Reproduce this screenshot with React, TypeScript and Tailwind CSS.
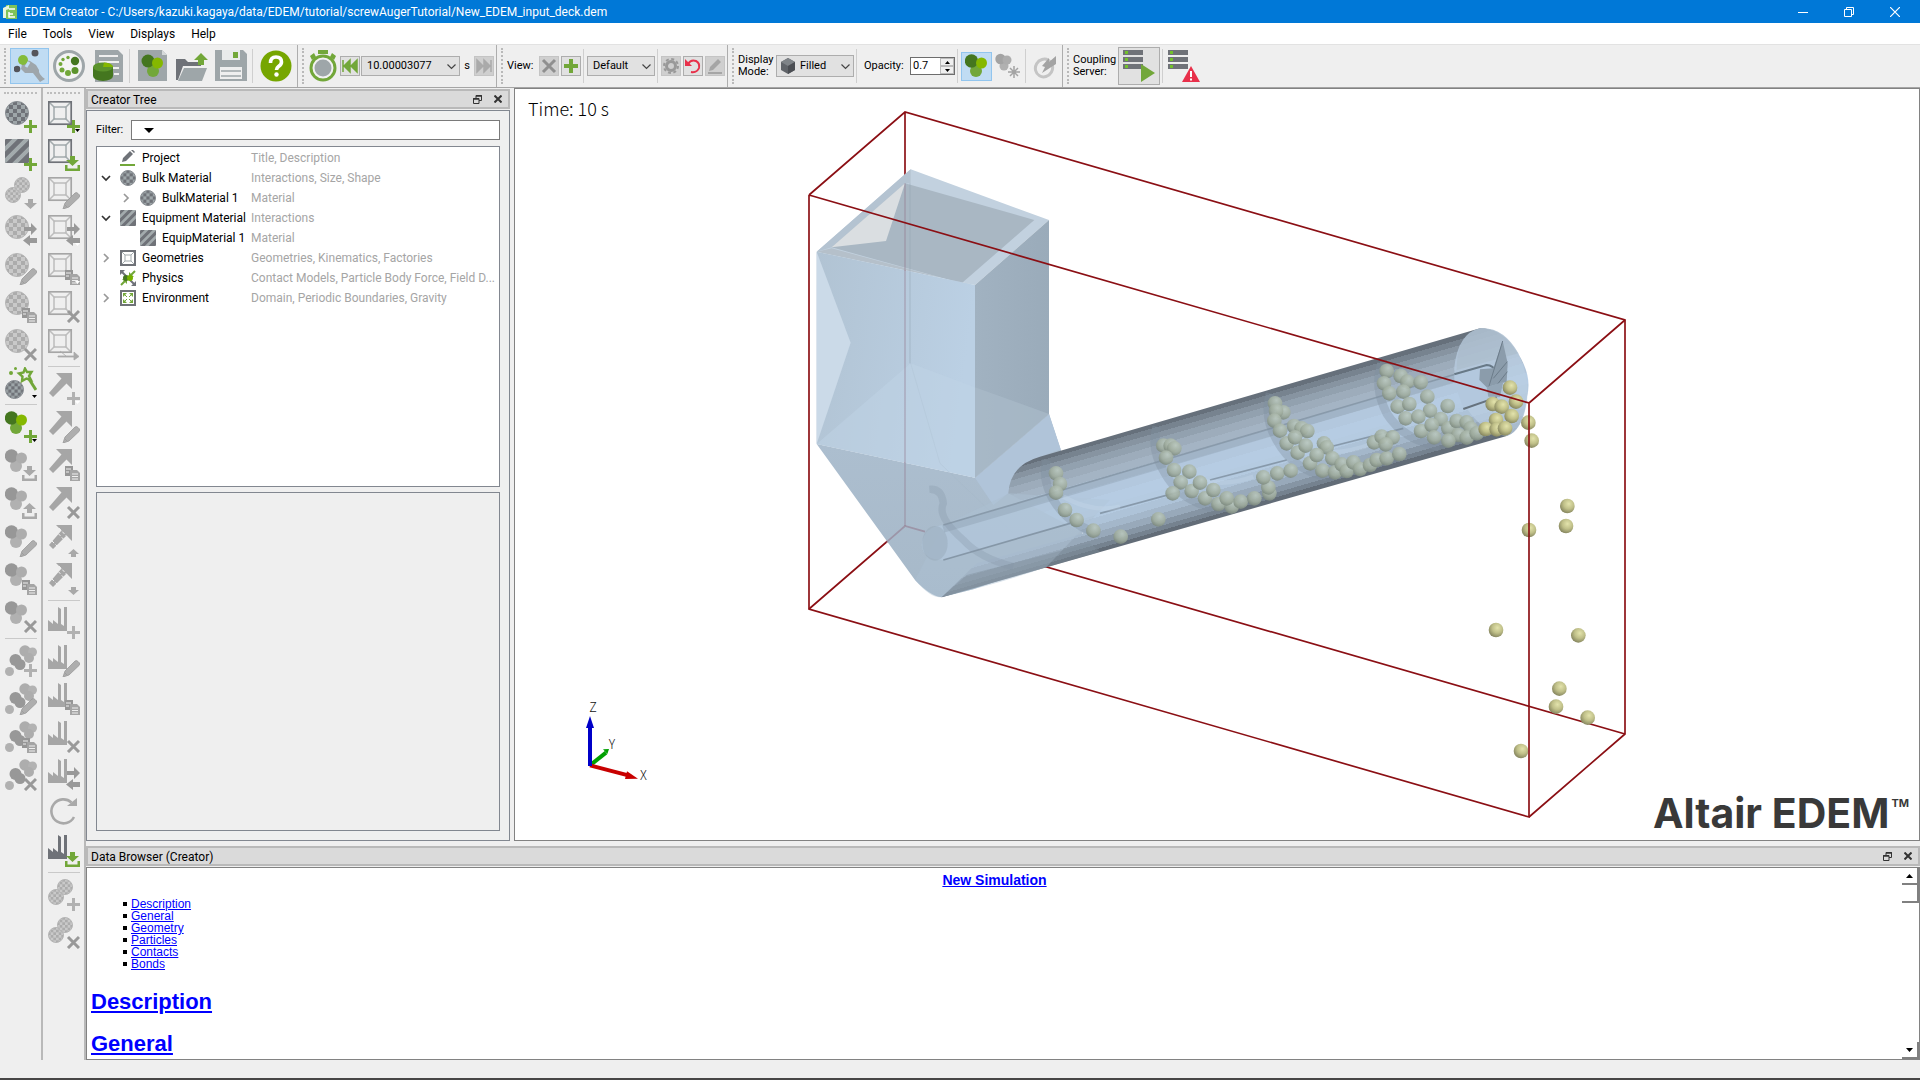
import type { ReactNode } from 'react';

const GREEN = '#72a739';
const GREY = '#a9a9a9';
const SLATE = '#6f7278';

/* ---------- shared icon parts (32 x 32 grid) ---------- */

function Checker({ cx, cy, r, on, n = 6 }: { cx: number; cy: number; r: number; on: boolean; n?: number }) {
  const id = `chk-${cx}-${cy}-${r}-${on ? 1 : 0}`;
  const cell = (r * 2) / n;
  return (
    <>
      <pattern id={id} x={cx - r} y={cy - r} width={cell * 2} height={cell * 2} patternUnits="userSpaceOnUse">
        <rect width={cell * 2} height={cell * 2} fill={on ? '#9ea6a9' : '#c9c9c9'} />
        <rect width={cell} height={cell} fill={on ? SLATE : '#acacac'} />
        <rect x={cell} y={cell} width={cell} height={cell} fill={on ? SLATE : '#acacac'} />
      </pattern>
      <circle cx={cx} cy={cy} r={r - 0.5} fill={`url(#${id})`} stroke={on ? '#868b90' : '#b5b5b5'} />
    </>
  );
}

function Stripes({ size }: { size: number }) {
  return (
    <>
      <clipPath id={`stripe-${size}`}>
        <rect width={size} height={size} rx="1" />
      </clipPath>
      <g clipPath={`url(#stripe-${size})`}>
        <rect width={size} height={size} fill={SLATE} />
        <path
          d="M-4 14L14 -4M-4 26L26 -4M2 32L32 2"
          stroke="#a3abad"
          strokeWidth="4"
          transform={`scale(${size / 24})`}
        />
      </g>
    </>
  );
}

function Particles({ on }: { on: boolean }) {
  return (
    <>
      <circle cx="11" cy="17" r="6" fill={on ? '#72a739' : '#b1b1b1'} />
      <circle cx="6.5" cy="7" r="6.7" fill={on ? '#44761f' : '#979797'} />
      <circle cx="16.5" cy="9" r="5.5" fill={on ? '#85b800' : '#adadad'} />
    </>
  );
}

function Cluster() {
  return (
    <>
      <circle cx="20" cy="6" r="5.7" fill="#adadad" />
      <circle cx="27.5" cy="7" r="4.5" fill="#b3b3b3" />
      <circle cx="24" cy="13" r="5" fill="#adadad" />
      <circle cx="10.5" cy="15" r="6" fill="#989898" />
      <circle cx="15" cy="19.5" r="5.5" fill="#989898" />
      <circle cx="4.5" cy="26.5" r="4.5" fill="#b1b1b1" />
    </>
  );
}

function Frame({ on }: { on: boolean }) {
  const outer = on ? SLATE : '#a6a6a6';
  const inner = on ? '#a3abad' : '#bdbdbd';
  return (
    <g fill="none">
      <path d="M1 1L7 7M23 1L17 7M1 23L7 17M23 23L17 17" stroke={inner} strokeWidth="1.5" />
      <rect x="6" y="6" width="12" height="12" stroke={inner} strokeWidth="1.5" />
      <rect x="0.8" y="0.8" width="22.4" height="22.4" stroke={outer} strokeWidth="1.7" />
    </g>
  );
}

function Arrow({ dashed }: { dashed?: boolean }) {
  return (
    <>
      <path d="M8 0H24V16L18.5 10.5L5 24L1 20L13.5 5.5Z" fill="#a6a6a6" />
      {dashed && <path d="M7 5l12 13M11 3l11 12M4 16l6 6" stroke="#efefef" strokeWidth="1" strokeDasharray="3 2" />}
    </>
  );
}

function Factory({ on }: { on?: boolean }) {
  return <path d="M0 24V13L5 17V13L10 17V0L13 2V17L16 19V0H19V24Z" fill={on ? SLATE : '#a6a6a6'} />;
}

const badges: Record<string, (on: boolean) => ReactNode> = {
  plus: (on) => <path d="M25.5 19V32M19 25.5H32" stroke={on ? GREEN : '#b1b1b1'} strokeWidth="3" />,
  cross: () => <path d="M20 20L31 31M31 20L20 31" stroke="#999" strokeWidth="3" />,
  drop: () => <path d="M23 22H28V26H32L25.5 32L19 26H23Z" fill={GREY} />,
  raise: () => <path d="M25.5 24L31 29H28V32H23V29H20Z" fill={GREY} />,
  lower: () => <path d="M25.5 32L31 27H28V24H23V27H20Z" fill={GREY} />,
  swap: () => <path d="M19 12H26V8L32 14L26 20V16H19ZM32 23H25V20L18 25.5L25 31V28H32Z" fill="#999" />,
  pencil: () => (
    <path
      d="M15 32L17 26L27 16Q28.5 15 30 16.5L31.5 18Q32.5 19 31 20.5L21 30ZM17 28L19 30"
      fill="#aeaeae"
      stroke="#999"
      strokeWidth="0.8"
    />
  ),
  copy: () => (
    <>
      <path d="M17 17H25V27H17Z" fill="#969696" />
      <path d="M22 21H29L32 24V32H22Z" fill="#a5a5a5" />
      <path d="M18 20H23M18 23H21M24 25H30M24 27.5H30M24 30H30" stroke="#efefef" />
    </>
  ),
  download: (on) => (
    <path
      d="M22 17H27V21H31L24.5 27L18 21H22ZM17 26H19.5V29.5H29.5V26H32V32H17Z"
      fill={on ? GREEN : GREY}
    />
  ),
  upload: () => <path d="M22 26H27V22H31L24.5 16L18 22H22ZM17 26H19.5V29.5H29.5V26H32V32H17Z" fill={GREY} />,
  shift: () => (
    <path d="M12 22L18 27M10 27H26V23L31 27.5L26 31V28H10Z" fill={GREY} stroke={GREY} strokeWidth="0.8" />
  ),
};

function base(kind: string, on: boolean): ReactNode {
  switch (kind) {
    case 'bulk':
      return <Checker cx={12} cy={12} r={12} on={on} />;
    case 'equip':
      return <Stripes size={24} />;
    case 'pair':
      return (
        <>
          <Checker cx={8} cy={18} r={8} on={false} />
          <Checker cx={17} cy={8} r={8} on={false} />
        </>
      );
    case 'wand':
      return (
        <>
          <Checker cx={9.5} cy={22.5} r={9.5} on />
          <circle cx="6" cy="6" r="2" fill={GREEN} />
          <circle cx="10.5" cy="1.5" r="1.5" fill={GREEN} />
          <path
            d="M20 1.5L22 5H26.5L24 9L26 13L21.5 11.5L17 14L17.5 9.5L14 6.5L18.5 5.5Z"
            fill="none"
            stroke={GREEN}
            strokeWidth="2.4"
          />
          <path d="M24 12L31 23" stroke={GREEN} strokeWidth="3" />
        </>
      );
    case 'particles':
      return <Particles on={on} />;
    case 'cluster':
      return <Cluster />;
    case 'frame':
      return <Frame on={on} />;
    case 'arrow':
      return <Arrow />;
    case 'darrow':
      return <Arrow dashed />;
    case 'factory':
      return <Factory on={on} />;
    default:
      return (
        <>
          <path d="M26 20A12 12 0 1 1 23.5 5.5" fill="none" stroke={GREY} strokeWidth="2.6" />
          <path d="M19 9H29V1Z" fill={GREY} />
        </>
      );
  }
}

interface Tool {
  label: string;
  kind: string;
  badge?: string;
  on?: boolean;
  menu?: 'dark' | 'light';
}

const materialTools: (Tool | null)[] = [
  { label: 'Add bulk material', kind: 'bulk', badge: 'plus', on: true },
  { label: 'Add equipment material', kind: 'equip', badge: 'plus', on: true },
  { label: 'Import material', kind: 'pair', badge: 'drop' },
  { label: 'Transfer material', kind: 'bulk', badge: 'swap' },
  { label: 'Rename material', kind: 'bulk', badge: 'pencil' },
  { label: 'Copy material', kind: 'bulk', badge: 'copy' },
  { label: 'Delete material', kind: 'bulk', badge: 'cross' },
  { label: 'Material wizard', kind: 'wand', on: true, menu: 'dark' },
  null,
  { label: 'Add particle', kind: 'particles', badge: 'plus', on: true, menu: 'dark' },
  { label: 'Import particle', kind: 'particles', badge: 'download' },
  { label: 'Export particle', kind: 'particles', badge: 'upload' },
  { label: 'Rename particle', kind: 'particles', badge: 'pencil' },
  { label: 'Copy particle', kind: 'particles', badge: 'copy' },
  { label: 'Delete particle', kind: 'particles', badge: 'cross' },
  null,
  { label: 'Add meta-particle', kind: 'cluster', badge: 'plus' },
  { label: 'Rename meta-particle', kind: 'cluster', badge: 'pencil' },
  { label: 'Copy meta-particle', kind: 'cluster', badge: 'copy' },
  { label: 'Delete meta-particle', kind: 'cluster', badge: 'cross' },
];

const geometryTools: (Tool | null)[] = [
  { label: 'Add geometry', kind: 'frame', badge: 'plus', on: true, menu: 'dark' },
  { label: 'Import geometry', kind: 'frame', badge: 'download', on: true },
  { label: 'Rename geometry', kind: 'frame', badge: 'pencil' },
  { label: 'Transform geometry', kind: 'frame', badge: 'swap', menu: 'light' },
  { label: 'Copy geometry', kind: 'frame', badge: 'copy', menu: 'light' },
  { label: 'Delete geometry', kind: 'frame', badge: 'cross' },
  { label: 'Merge geometry', kind: 'frame', badge: 'shift' },
  null,
  { label: 'Add kinematic', kind: 'arrow', badge: 'plus', menu: 'light' },
  { label: 'Rename kinematic', kind: 'arrow', badge: 'pencil' },
  { label: 'Copy kinematic', kind: 'arrow', badge: 'copy' },
  { label: 'Delete kinematic', kind: 'arrow', badge: 'cross' },
  { label: 'Move kinematic up', kind: 'darrow', badge: 'raise' },
  { label: 'Move kinematic down', kind: 'darrow', badge: 'lower' },
  null,
  { label: 'Add factory', kind: 'factory', badge: 'plus' },
  { label: 'Rename factory', kind: 'factory', badge: 'pencil' },
  { label: 'Copy factory', kind: 'factory', badge: 'copy' },
  { label: 'Delete factory', kind: 'factory', badge: 'cross' },
  { label: 'Transfer factory', kind: 'factory', badge: 'swap' },
  { label: 'Reset factory', kind: 'refresh' },
  { label: 'Import factory', kind: 'factory', badge: 'download', on: true },
  null,
  { label: 'Add material block', kind: 'pair', badge: 'plus' },
  { label: 'Delete material block', kind: 'pair', badge: 'cross' },
];

function ToolColumn({ tools }: { tools: (Tool | null)[] }) {
  return (
    <div className="flex w-[43px] shrink-0 flex-col border-r-2 border-[#b9b9b9] pt-1 pl-[2px]">
      <div className="mr-1 mb-1 ml-[2px] border-t-2 border-dotted border-[#bdbdbd]" />
      {tools.map((t, i) =>
        t ? (
          <button key={t.label} aria-label={t.label} className="h-[38px] shrink-0 pl-[3px]">
            <svg viewBox="0 0 32 32" className="h-8 w-8">
              {base(t.kind, !!t.on)}
              {t.badge && badges[t.badge](!!t.on)}
              {t.menu && <path d="M27 28H32L29.5 31Z" fill={t.menu === 'dark' ? '#000' : '#fff'} />}
            </svg>
          </button>
        ) : (
          <div key={i} className="my-[2px] mr-1 ml-[3px] h-[2px] shrink-0 border-t border-[#c9c9c9]" />
        ),
      )}
    </div>
  );
}

/* ---------- top toolbar ---------- */

function Group({ children, last }: { children: ReactNode; last?: boolean }) {
  return (
    <div className={last ? 'flex items-center' : 'flex items-center border-r border-[#adadad] pr-[2px]'}>
      <div className="mr-1 ml-1 h-9 border-l-2 border-dotted border-[#b9b9b9]" />
      {children}
    </div>
  );
}

function Sep() {
  return <div className="mr-[3px] ml-[2px] h-[34px] w-px shrink-0 bg-[#cfcfcf]" />;
}

function BigButton({ label, active, children }: { label: string; active?: boolean; children: ReactNode }) {
  return (
    <button
      aria-label={label}
      className={
        active
          ? 'flex h-9 w-[39px] items-center justify-center border border-[#92c5ee] bg-[#c0dcf3]'
          : 'flex h-9 w-[39px] items-center justify-center'
      }
    >
      <svg viewBox="0 0 32 32" className="h-8 w-8">
        {children}
      </svg>
    </button>
  );
}

function SmallButton({ label, off, children }: { label: string; off?: boolean; children: ReactNode }) {
  return (
    <button
      aria-label={label}
      className={
        off
          ? 'flex h-5 w-5 shrink-0 items-center justify-center border border-[#c4c4c4] bg-[#cfcfcf]'
          : 'flex h-5 w-5 shrink-0 items-center justify-center border border-[#adadad] bg-[#e1e1e1]'
      }
    >
      <svg viewBox="0 0 18 18" className="h-[18px] w-[18px]">
        {children}
      </svg>
    </button>
  );
}

function Dropdown({ label, value, className }: { label: string; value: string; className: string }) {
  return (
    <span className={`relative shrink-0 ${className}`}>
      <select
        aria-label={label}
        className={
          value === 'Filled'
            ? 'h-full w-full appearance-none border border-[#adadad] bg-[#e1e1e1] pl-[23px]'
            : 'h-full w-full appearance-none border border-[#adadad] bg-[#e1e1e1] pl-[5px]'
        }
      >
        <option>{value}</option>
      </select>
      <svg viewBox="0 0 9 6" className="absolute top-1/2 right-1 -mt-[2px] h-[6px] w-[9px]">
        <path d="M0.5 0.5L4.5 4.5L8.5 0.5" fill="none" stroke="#444" strokeWidth="1.2" />
      </svg>
    </span>
  );
}

function ServerStack() {
  return (
    <>
      {[0, 7, 14].map((y) => (
        <g key={y}>
          <rect x="0" y={y} width="20" height="5" fill={SLATE} />
          <rect x="2" y={y + 1} width="3" height="3" fill="#72c02c" />
        </g>
      ))}
    </>
  );
}

function Toolbar() {
  return (
    <div className="flex h-[44px] shrink-0 border-t border-b border-[#e2e2e2] border-b-[#a5a5a5] bg-[#efefef] text-[11px] leading-3">
      <Group>
        <BigButton label="Creator" active>
          <path d="M7 6L12 10L16 11L22 15L25 20Q24 24 31 29L26 32L19 23L11 23L7 19L8 14Z" fill="#9ea6ab" />
          <circle cx="9" cy="10" r="5" fill="#83bb3b" />
          <circle cx="21" cy="3" r="3.5" fill="#55555b" />
          <circle cx="3" cy="19" r="3.3" fill="#55555b" />
          <path d="M12 17L15 12" stroke="#c0dcf3" strokeWidth="3" />
        </BigButton>
        <BigButton label="Simulator">
          <circle cx="16" cy="16" r="14.5" fill="#f4f4f4" stroke="#9ea6a9" strokeWidth="3" />
          <g fill="#44761f">
            <circle cx="22" cy="11" r="4.2" />
            <circle cx="22" cy="20.5" r="3.5" fill="#5b932c" />
            <circle cx="15" cy="23" r="3" fill={GREEN} />
            <circle cx="9" cy="20" r="2.5" fill={GREEN} />
            <circle cx="7.5" cy="14" r="2" fill={GREEN} />
            <circle cx="10" cy="9.5" r="1.7" fill={GREEN} />
            <circle cx="15" cy="7.5" r="1.7" fill={GREEN} />
          </g>
        </BigButton>
        <BigButton label="Analyst">
          <path d="M3 0H26L31 5V32H3Z" fill="#9ea6a9" />
          <path d="M7 6H26M7 12H27M20 18H27M22 24H27" stroke="#efefef" strokeWidth="2" />
          <path d="M1 17V26A10 5 0 0 0 21 26V17Z" fill="#44761f" />
          <ellipse cx="11" cy="17" rx="10" ry="4.5" fill="#5b932c" />
          <path d="M11 17L12 12.5A10 4.5 0 0 1 21 17Z" fill="#85b800" />
        </BigButton>
        <Sep />
        <BigButton label="New">
          <path d="M1 0H25L30 5V31H1Z" fill="#9ea6a9" />
          <path d="M25 0V5H30Z" fill="#d5d9da" />
          <circle cx="16" cy="21" r="6" fill={GREEN} />
          <circle cx="11" cy="11" r="6.5" fill="#44761f" />
          <circle cx="20.5" cy="13" r="5.5" fill="#85b800" />
        </BigButton>
        <BigButton label="Open">
          <path d="M0 9H9L12 12H25V16H7L2 30H0Z" fill="#6f7278" />
          <path d="M8 18H31L26 31H2Z" fill="#9ea6a9" />
          <path d="M25 3L32 10H28V15H22V10H18Z" fill={GREEN} />
        </BigButton>
        <BigButton label="Save">
          <path d="M0 0H28L32 4V31H0Z" fill="#9ea6a9" />
          <path d="M7 0H25V10H7Z" fill="#e9ebeb" />
          <path d="M18 2H23V8H18Z" fill={GREEN} />
          <path d="M5 17H27V29H5Z" fill="#efefef" />
          <path d="M6 21H26M6 26H26" stroke="#9ea6a9" strokeWidth="1.5" />
        </BigButton>
        <Sep />
        <BigButton label="Help">
          <circle cx="16" cy="16" r="15.5" fill="#76a600" />
          <path
            d="M10.5 13Q10.5 7 16 7Q21.5 7 21.5 12Q21.5 14.5 18.5 16.5Q16.5 18 16.5 20"
            fill="none"
            stroke="#fff"
            strokeWidth="3.6"
          />
          <circle cx="16.5" cy="24.5" r="2.2" fill="#fff" />
        </BigButton>
      </Group>

      <Group>
        <svg viewBox="0 0 30 32" className="mr-[2px] h-8 w-[30px]">
          <path d="M10 0H20V4H10ZM2 6L6 3L8 7L4 10ZM28 6L24 3L22 7L26 10Z" fill={GREEN} />
          <circle cx="15" cy="18" r="12" fill="#f2f2f2" stroke={GREEN} strokeWidth="3" />
          <circle cx="15" cy="18" r="8.5" fill="#9ea6a9" />
        </svg>
        <SmallButton label="First step">
          <path d="M2 3V15M9 3L3 9L9 15ZM16 3L10 9L16 15Z" fill={GREEN} stroke={GREEN} strokeWidth="1.5" />
        </SmallButton>
        <Dropdown label="Time step" value="10.00003077" className="ml-px h-5 w-[99px]" />
        <span className="w-[14px] text-center">s</span>
        <SmallButton label="Last step" off>
          <path d="M16 3V15M9 3L15 9L9 15ZM2 3L8 9L2 15Z" fill="#aaa" stroke="#aaa" strokeWidth="1.5" />
        </SmallButton>
      </Group>

      <Group>
        <span className="w-8">View:</span>
        <SmallButton label="Delete view" off>
          <path d="M3 3L15 15M15 3L3 15" stroke="#8f8f8f" strokeWidth="3" />
        </SmallButton>
        <span className="w-[2px]" />
        <SmallButton label="Add view">
          <path d="M9 2V16M2 9H16" stroke={GREEN} strokeWidth="4" />
        </SmallButton>
        <Sep />
        <Dropdown label="Saved view" value="Default" className="h-5 w-[68px]" />
        <Sep />
        <div className="flex gap-[2px]">
          <SmallButton label="View settings" off>
            <circle cx="9" cy="9" r="4.5" fill="none" stroke="#999" strokeWidth="3" />
            <circle cx="9" cy="9" r="7" fill="none" stroke="#999" strokeWidth="2" strokeDasharray="3 2.5" />
          </SmallButton>
          <SmallButton label="Reset view">
            <path d="M4 7Q7 2 12 4Q16 6 15 11Q13 16 7 15" fill="none" stroke="#e8304a" strokeWidth="2" />
            <path d="M1 2V9H8Z" fill="#e8304a" />
          </SmallButton>
          <SmallButton label="Edit view" off>
            <path d="M3 14L4 10L12 2L15 5L7 13ZM2 15H16V17H2Z" fill="#a5a5a5" />
          </SmallButton>
        </div>
      </Group>

      <Group>
        <span className="w-[38px]">
          Display
          <br />
          Mode:
        </span>
        <span className="relative">
          <Dropdown label="Display mode" value="Filled" className="block h-[22px] w-[78px]" />
          <svg viewBox="0 0 16 16" className="pointer-events-none absolute top-[3px] left-1 h-4 w-4">
            <path d="M8 0L15 4V12L8 16L1 12V4Z" fill="#606469" />
            <path d="M8 0L15 4L8 8L1 4Z" fill="#7f8488" />
            <path d="M8 8L15 4V12L8 16Z" fill="#4b4e53" />
          </svg>
        </span>
        <Sep />
        <label htmlFor="opacity" className="mr-1 ml-1 w-[42px]">
          Opacity:
        </label>
        <div className="flex h-[18px] w-[45px] border border-[#6d6d6d] bg-white">
          <input id="opacity" defaultValue="0.7" className="w-[29px] pl-[2px]" />
          <div className="flex w-[14px] flex-col">
            <button aria-label="Increase" className="flex h-2 items-center justify-center border border-[#bbb] bg-[#efefef]">
              <svg viewBox="0 0 5 3" className="h-[3px] w-[5px]">
                <path d="M0 3L2.5 0L5 3Z" />
              </svg>
            </button>
            <button aria-label="Decrease" className="flex h-2 items-center justify-center border border-[#bbb] bg-[#efefef]">
              <svg viewBox="0 0 5 3" className="h-[3px] w-[5px]">
                <path d="M0 0L2.5 3L5 0Z" />
              </svg>
            </button>
          </div>
        </div>
        <Sep />
        <button aria-label="Show particles" className="flex h-[29px] w-[31px] items-center justify-center border border-[#92c5ee] bg-[#c0dcf3]">
          <svg viewBox="0 0 24 24" className="h-6 w-6">
            <Particles on />
          </svg>
        </button>
        <button aria-label="Freeze particles" className="flex h-[29px] w-[31px] items-center justify-center">
          <svg viewBox="0 0 26 26" className="h-[26px] w-[26px]">
            <circle cx="9" cy="13" r="4.5" fill="#b1b1b1" />
            <circle cx="5.5" cy="6" r="5.2" fill="#a3a3a3" />
            <circle cx="12" cy="7" r="4.5" fill="#adadad" />
            <path d="M19 13V25M13 19H25M15 15L23 23M23 15L15 23" stroke="#a3a3a3" strokeWidth="1.5" />
          </svg>
        </button>
        <Sep />
        <button aria-label="Clip plane" className="flex h-[29px] w-[31px] items-center justify-center">
          <svg viewBox="0 0 24 26" className="h-[26px] w-6">
            <ellipse cx="11" cy="15" rx="8.5" ry="9" fill="none" stroke="#c4c4c4" strokeWidth="3" transform="rotate(30 11 15)" />
            <path d="M9 13L16 5V9L23 3V11L9 20L12 14Z" fill="#a3a3a3" />
          </svg>
        </button>
      </Group>

      <Group last>
        <span className="w-[45px]">
          Coupling
          <br />
          Server:
        </span>
        <button aria-label="Start coupling server" className="flex h-[38px] w-[42px] items-center justify-center border border-[#adadad] bg-[#e1e1e1]">
          <svg viewBox="0 0 32 32" className="h-8 w-8">
            <ServerStack />
            <path d="M18 14L32 23L18 32Z" fill={GREEN} />
          </svg>
        </button>
        <Sep />
        <button aria-label="Coupling server errors" className="flex h-[38px] w-9 items-center justify-center">
          <svg viewBox="0 0 32 32" className="h-8 w-8">
            <ServerStack />
            <path d="M23 16L32 32H14Z" fill="#e8304a" />
            <path d="M23 21V27M23 28.5V30.5" stroke="#fff" strokeWidth="2" />
          </svg>
        </button>
      </Group>
    </div>
  );
}

/* ---------- dock panels ---------- */

function DockTitle({ children }: { children: ReactNode }) {
  return (
    <div className="flex h-5 shrink-0 items-center border-2 border-[#b9b9b9] bg-[#dadada] pr-[6px] pl-[3px] text-[12px]">
      <span className="flex-1 pt-px">{children}</span>
      <button aria-label="Float panel" className="mr-3">
        <svg viewBox="0 0 9 9" className="h-[9px] w-[9px]">
          <path d="M3 3V0.5H8.5V5.5H6M0.5 3.5H6V8.5H0.5Z" fill="none" stroke="#333" />
          <path d="M0 4H6M3 1H9" stroke="#333" strokeWidth="1.5" />
        </svg>
      </button>
      <button aria-label="Close panel">
        <svg viewBox="0 0 8 8" className="h-2 w-2">
          <path d="M0.5 0.5L7.5 7.5M7.5 0.5L0.5 7.5" stroke="#333" strokeWidth="2" />
        </svg>
      </button>
    </div>
  );
}

const treeIcons: Record<string, ReactNode> = {
  project: (
    <>
      <path d="M2 12L3 8L10 1L13 4L6 11ZM11 0L12 -1L15 2L14 3Z" fill={SLATE} />
      <path d="M0 15H15" stroke={GREEN} strokeWidth="2" />
    </>
  ),
  bulk: <Checker cx={8} cy={8} r={8} on n={5} />,
  equip: <Stripes size={16} />,
  geometry: (
    <g fill="none">
      <rect x="1" y="1" width="14" height="14" stroke={SLATE} strokeWidth="2" />
      <rect x="5" y="5" width="6" height="6" stroke="#a3abad" />
      <path d="M2 2L5 5M14 2L11 5M2 14L5 11M14 14L11 11" stroke="#a3abad" />
    </g>
  ),
  physics: (
    <>
      <path d="M0 0H5L0 5ZM16 16H11L16 11Z" fill={SLATE} />
      <path d="M1 1L6 6M15 15L10 10" stroke={SLATE} strokeWidth="2" />
      <path d="M15 1L10 6M1 15L6 10" stroke={GREEN} strokeWidth="2" />
      <path d="M9 2V7H14ZM2 9H7V14Z" fill={GREEN} />
      <circle cx="6" cy="8" r="3" fill="#44761f" />
      <circle cx="10" cy="8" r="3" fill="#76b000" />
    </>
  ),
  environment: (
    <>
      <rect x="1" y="1" width="14" height="14" fill="#fff" stroke={SLATE} strokeWidth="2" />
      <path d="M3 3H7L3 7ZM13 3H9L13 7ZM3 13H7L3 9ZM13 13H9L13 9Z" fill={GREEN} />
      <path d="M4 4L7 7M12 4L9 7M4 12L7 9M12 12L9 9" stroke={GREEN} />
    </>
  ),
};

const tree = [
  { name: 'Project', info: 'Title, Description', icon: 'project' },
  { name: 'Bulk Material', info: 'Interactions, Size, Shape', icon: 'bulk', open: true },
  { name: 'BulkMaterial 1', info: 'Material', icon: 'bulk', child: true, open: false },
  { name: 'Equipment Material', info: 'Interactions', icon: 'equip', open: true },
  { name: 'EquipMaterial 1', info: 'Material', icon: 'equip', child: true },
  { name: 'Geometries', info: 'Geometries, Kinematics, Factories', icon: 'geometry', open: false },
  { name: 'Physics', info: 'Contact Models, Particle Body Force, Field D...', icon: 'physics' },
  { name: 'Environment', info: 'Domain, Periodic Boundaries, Gravity', icon: 'environment', open: false },
];

function CreatorTree() {
  return (
    <aside className="flex w-[424px] shrink-0 flex-col pt-px">
      <DockTitle>Creator Tree</DockTitle>
      <div className="mt-px flex flex-1 flex-col border border-[#828790] p-[9px]">
        <div className="flex h-5 items-center">
          <label htmlFor="filter" className="w-[35px] text-[11px]">
            Filter:
          </label>
          <span className="relative h-5 flex-1">
            <input id="filter" className="h-full w-full border border-[#7a7a7a] bg-white pl-8" />
            <svg viewBox="0 0 10 5" className="absolute top-2 left-[13px] h-[5px] w-[10px]">
              <path d="M0 0H10L5 5Z" />
            </svg>
          </span>
        </div>
        <div className="mt-[6px] flex-1 overflow-hidden border border-[#828790] bg-white pt-px">
          {tree.map((row) => (
            <div key={row.name} className="flex h-5 items-center text-[12px] whitespace-nowrap">
              <div className={row.child ? 'flex w-[154px] shrink-0 items-center pl-5' : 'flex w-[154px] shrink-0 items-center'}>
                <span className="flex w-[23px] shrink-0 items-center pl-1">
                  {row.open !== undefined && (
                    <svg viewBox="0 0 10 10" className="h-[10px] w-[10px]">
                      {row.open ? (
                        <path d="M1 3L5 7L9 3" fill="none" stroke="#333" strokeWidth="1.7" />
                      ) : (
                        <path d="M3 1L7 5L3 9" fill="none" stroke="#999" strokeWidth="1.7" />
                      )}
                    </svg>
                  )}
                </span>
                <svg viewBox="0 0 16 16" className="mr-[6px] h-4 w-4 shrink-0">
                  {treeIcons[row.icon]}
                </svg>
                {row.name}
              </div>
              <span className="text-[#a5a5a5]">{row.info}</span>
            </div>
          ))}
        </div>
        <div className="mt-[5px] flex-1 border border-[#828790]" />
      </div>
    </aside>
  );
}

/* ---------- 3D view ---------- */

// Centres of the particles still inside the tube.
const inside: [number, number][] = [
  [-192, 520], [-180, 552], [-192, 578], [-165, 630], [-130, 660], [-80, 692], [2, 710],
  [130, 437], [152, 437], [163, 445], [138, 473], [162, 510], [208, 515], [182, 547], [215, 573],
  [240, 548], [158, 580], [255, 595], [280, 570], [295, 612], [335, 620], [320, 595], [362, 605],
  [403, 595], [448, 580], [445, 562], [430, 532], [472, 520], [512, 512], [115, 658],
  [465, 310], [490, 337], [468, 333], [463, 362], [480, 392], [522, 378], [545, 385], [562, 393],
  [500, 430], [525, 412], [533, 458], [557, 437], [612, 430], [620, 442], [570, 490], [590, 465],
  [637, 475], [607, 512], [645, 517], [665, 493], [680, 513], [700, 487], [720, 507], [750, 495],
  [770, 480], [800, 475], [838, 462], [762, 427], [785, 410], [818, 412], [797, 433],
  [800, 213], [842, 228], [792, 250], [862, 245], [902, 247], [808, 280], [850, 275], [922, 290],
  [833, 320], [868, 312], [930, 332], [857, 355], [895, 350], [983, 318], [962, 357], [903, 393],
  [935, 375], [942, 412], [985, 385], [1010, 363], [1040, 367], [1052, 385], [1015, 405], [985, 422],
  [1040, 413], [1070, 400],
];

const outside: [number, number][] = [
  [1118, 312], [1145, 320], [1188, 305], [1170, 263], [1128, 360], [1175, 348], [1097, 387],
  [1130, 388], [1155, 385], [1225, 368], [1235, 422], [1227, 690], [1342, 618], [1338, 678],
  [1128, 990], [1375, 1006], [1318, 1166], [1308, 1220], [1403, 1253], [1203, 1353],
];

// Shading bands over the tube's width, from its upper to its lower edge.
const bands: [number, string][] = [
  [0, '#66707b'], [4, '#77838f'], [9, '#8794a1'], [14, '#92a1af'], [20, '#9dacbb'], [27, '#a4b4c4'],
  [34, '#abbdcf'], [41, '#b1c5da'], [50, '#b6cde5'], [60, '#b4cae0'], [68, '#aec3d8'], [75, '#a4b7ca'],
  [81, '#98a9ba'], [87, '#8695a4'], [92, '#75828f'], [96, '#626c77'],
];

function Scene() {
  return (
    <svg viewBox="1545 267 4212 2253" className="block h-full w-full">
      <defs>
        <linearGradient id="tube" gradientUnits="userSpaceOnUse" x1="3600" y1="1230" x2="3691" y2="1545">
          {bands.map(([at, color], i) => [
            <stop key={`${at}a`} offset={`${at}%`} stopColor={color} />,
            <stop key={`${at}b`} offset={`${i + 1 < bands.length ? bands[i + 1][0] : 100}%`} stopColor={color} />,
          ])}
        </linearGradient>
        <linearGradient id="front" x1="0" y1="0" x2="1" y2="0.2">
          <stop offset="0" stopColor="#b1c3d3" />
          <stop offset="1" stopColor="#bbd0e4" />
        </linearGradient>
        <linearGradient id="side" x1="0" y1="0" x2="1" y2="0">
          <stop offset="0" stopColor="#a1b2c1" />
          <stop offset="1" stopColor="#9aabba" />
        </linearGradient>
        <linearGradient id="cone" x1="0" y1="0" x2="0" y2="1">
          <stop offset="0" stopColor="#adbfd0" />
          <stop offset="1" stopColor="#a7b9c9" />
        </linearGradient>
        <radialGradient id="ball" cx="0.6" cy="0.35" r="0.7">
          <stop offset="0" stopColor="#e3e3ac" />
          <stop offset="0.5" stopColor="#c0c089" />
          <stop offset="1" stopColor="#7f7f5a" />
        </radialGradient>
        <radialGradient id="dimBall" cx="0.6" cy="0.3" r="0.75">
          <stop offset="0" stopColor="#bbc9c0" />
          <stop offset="0.6" stopColor="#9fac9e" />
          <stop offset="1" stopColor="#77847a" />
        </radialGradient>
      </defs>

      {/* rear edges of the domain */}
      <path
        d="M2715 336V1578M2427 1827L2715 1578L4875 2202M2427 585L2715 336L4875 960V2202L4587 2451"
        fill="none"
        stroke="#8b0f14"
        strokeWidth="5"
      />

      {/* hopper */}
      <g transform="translate(2400 300)">
        <path d="M50 1032L345 1440Q390 1488 425 1492L520 1468L860 1350L782 1048L747 942L525 1133Z" fill="url(#cone)" />
        <path d="M525 1133L747 942L782 1048L720 1070Q630 1110 625 1180L580 1215Z" fill="#b0c4d9" />
        <path d="M50 455L332 208L747 360L525 555Z" fill="#c2d1df" />
        <path d="M50 455L332 208V250H315L95 442Z" fill="#b4c3d1" />
        <path d="M95 442L315 250L703 360L485 550Z" fill="#a9b7c3" />
        <path d="M95 442L315 250L258 423Z" fill="#dadee1" />
        <path d="M50 455L95 445L485 550L525 555Z" fill="#b5c0ca" />
        <path d="M50 455L525 555V1133L50 1032Z" fill="url(#front)" />
        <path d="M50 455L152 728L50 1032Z" fill="#cbdae8" />
        <path d="M525 555L747 360V942L525 1133Z" fill="url(#side)" />
        <path d="M50 1032L332 790L525 862V1133Z" fill="#bfd3e6" opacity="0.5" />
        <path d="M525 862L747 942L525 1133Z" fill="#a9bac9" opacity="0.7" />
        <path d="M332 790L420 1090L640 1300" fill="none" stroke="#9fb2c4" strokeWidth="2" opacity="0.3" />
        <path d="M315 250V1278" stroke="#8f6f84" strokeWidth="5" opacity="0.35" />
        <path d="M330 250V790" stroke="#93a5b4" strokeWidth="3" opacity="0.5" />
        <path d="M258 1328L315 1278L375 1295" fill="none" stroke="#8f6f84" strokeWidth="5" opacity="0.5" />
      </g>

      {/* auger tube */}
      <path
        d="M3120 1370L4440 985Q4500 985 4540 1040Q4600 1120 4581 1190Q4570 1290 4520 1308L2825 1792L2930 1690L3250 1600L3025 1480Q3030 1395 3120 1370Z"
        fill="url(#tube)"
      />
      <path d="M2820 1792Q2790 1792 2745 1740L2830 1575L3030 1480L3330 1500L3140 1700Q3020 1745 2820 1792Z" fill="#abbfd2" opacity="0.5" />
      <path d="M2825 1792L3300 1655L3270 1630L2900 1725Z" fill="#7f8e9c" opacity="0.45" />

      <g transform="translate(3360 900)">
        {/* shaft */}
        <path d="M-530 675L1100 195Q1140 200 1150 235L1130 292L-530 780Q-590 780 -595 735Q-590 680 -530 675Z" fill="#b5cbe1" opacity="0.5" />
        <path d="M-530 675L1100 195" stroke="#8293a3" strokeWidth="5" opacity="0.8" />
        <path d="M-530 687L1100 208" stroke="#8798a8" strokeWidth="22" opacity="0.35" />
        <path d="M-530 780L-150 670M-60 640L180 575M270 540L500 480M640 438L850 385M1030 325L1130 292" stroke="#7d8e9e" strokeWidth="5" opacity="0.8" />
        <ellipse cx="-555" cy="730" rx="38" ry="52" fill="#93a5b5" opacity="0.4" />
        <path d="M-572 568Q-535 565 -530 610Q-550 650 -470 720Q-420 775 -320 800" fill="none" stroke="#8495a5" strokeWidth="22" opacity="0.3" />

        {/* screw flights */}
        <g fill="none" stroke="#7e8f9f" strokeWidth="26" opacity="0.35">
          <path d="M-220 480Q-235 540 -200 600Q-150 680 -60 700" />
          <path d="M110 380Q90 450 135 520Q180 600 280 625" />
          <path d="M450 280Q430 350 470 420Q520 510 620 530" />
          <path d="M785 190Q760 260 800 340Q850 420 960 440" />
        </g>
        <g fill="none" stroke="#cfe0ef" strokeWidth="14" opacity="0.25">
          <path d="M-170 590Q-80 640 0 620M240 540Q320 560 400 530M560 450Q660 470 760 430" />
        </g>

        {inside.map(([x, y], i) => (
          <circle key={i} cx={x} cy={y} r="22" fill="url(#dimBall)" opacity="0.9" />
        ))}

        {/* open end */}
        <path d="M1080 85Q1150 80 1195 160Q1230 230 1220 310Q1205 395 1160 408Q1090 400 1040 325Q1000 260 1003 200Q1015 100 1080 85Z" fill="#b9cde2" opacity="0.75" />
        <path d="M1080 85Q1150 80 1195 160L1010 210Q1010 100 1080 85Z" fill="#a9bac9" opacity="0.55" />
        <path d="M1003 223L1100 195Q1130 200 1145 220L1150 290L1030 325L1003 250Z" fill="#b3c8de" />
        <path d="M1003 223L1100 195Q1120 196 1128 215" fill="none" stroke="#687987" strokeWidth="6" />
        <path d="M1148 123L1163 190L1160 245L1100 262L1078 240L1080 208L1120 205Z" fill="#8b9cab" />
        <path d="M1148 123L1105 265M1162 185L1120 235M1162 215L1125 262" stroke="#6c7c8a" strokeWidth="3" />
        <path d="M1100 262L1150 245L1140 290L1105 290Z" fill="#94a6b6" />
        <path d="M1030 327L1130 292" stroke="#66727d" strokeWidth="6" />

        {outside.map(([x, y], i) => (
          <circle key={i} cx={x} cy={y} r="22" fill="url(#ball)" />
        ))}
      </g>

      {/* front edges of the domain */}
      <path d="M2427 585V1827L4587 2451V1209L2427 585M4587 1209L4875 960" fill="none" stroke="#8b0f14" strokeWidth="5" />

      {/* axis triad */}
      <g transform="translate(1500 2070)">
        <path d="M270 226L318 188" stroke="#00a000" strokeWidth="12" />
        <path d="M309 178L327 177L322 192Z" fill="#00a000" />
        <path d="M270 226L385 256" stroke="#c80000" strokeWidth="12" />
        <path d="M381 244L414 266L375 267Z" fill="#c80000" />
        <path d="M270 228V112" stroke="#0000c8" strokeWidth="12" />
        <path d="M270 78L282 114H258Z" fill="#0000c8" />
        <g fontFamily="Noto Sans CJK JP, sans-serif" fontWeight="300" fontSize="38" fill="#111">
          <text x="268" y="66">Z</text>
          <text x="326" y="177">Y</text>
          <text x="420" y="270">X</text>
        </g>
      </g>
    </svg>
  );
}

function Viewer() {
  return (
    <main className="relative ml-1 min-w-0 flex-1 overflow-hidden border border-[#828282] bg-white">
      <Scene />
      <p className="absolute top-[7px] left-[13px] text-[18px] leading-6 font-[Noto_Sans_CJK_JP,sans-serif] font-light">Time: 10 s</p>
      <p className="absolute right-[10px] bottom-[5px] flex items-start leading-[44px] font-bold text-[#393939] font-[Inter,sans-serif]">
        <span className="text-[41px]">Altair EDEM</span>
        <span className="pl-[2px] text-[11px] leading-6">TM</span>
      </p>
    </main>
  );
}

/* ---------- data browser ---------- */

const sections = ['Description', 'General', 'Geometry', 'Particles', 'Contacts', 'Bonds'];

function DataBrowser() {
  return (
    <section className="mt-[5px] flex h-[214px] shrink-0 flex-col">
      <DockTitle>Data Browser (Creator)</DockTitle>
      <div className="mt-px flex min-h-0 flex-1 border border-[#828282] bg-white text-[#0000ff] font-[Liberation_Sans,sans-serif]">
        <div className="min-w-0 flex-1 overflow-hidden px-1">
          <p className="pt-1 text-center text-[14px] leading-4 font-bold">
            <a href="#simulation" className="underline">
              New Simulation
            </a>
          </p>
          <ul className="mt-[10px] text-[12px] leading-3">
            {sections.map((s) => (
              <li key={s} className="flex items-center pl-8">
                <span className="mr-1 h-1 w-1 bg-black" />
                <a href={`#${s}`} className="underline">
                  {s}
                </a>
              </li>
            ))}
          </ul>
          <div className="mt-[19px] flex flex-col gap-4 text-[22px] leading-[26px] font-bold">
            <h2>
              <a href="#Description" className="underline">
                Description
              </a>
            </h2>
            <h2>
              <a href="#General" className="underline">
                General
              </a>
            </h2>
          </div>
        </div>
        <div className="flex w-[17px] flex-col">
          <button aria-label="Scroll up" className="flex h-[17px] items-center justify-center border-r-2 border-b-2 border-[#808080]">
            <svg viewBox="0 0 7 4" className="h-1 w-[7px]">
              <path d="M0 4L3.5 0L7 4Z" fill="#000" />
            </svg>
          </button>
          <div className="h-[18px] border-r-2 border-b-2 border-[#808080]" />
          <div className="flex-1" />
          <button aria-label="Scroll down" className="flex h-[17px] items-center justify-center border-r-2 border-b-2 border-[#808080]">
            <svg viewBox="0 0 7 4" className="h-1 w-[7px]">
              <path d="M0 0L3.5 4L7 0Z" fill="#000" />
            </svg>
          </button>
        </div>
      </div>
    </section>
  );
}

export default function App() {
  return (
    <div className="flex h-screen flex-col overflow-hidden bg-[#efefef] text-[12px] text-black font-[Roboto,sans-serif]">
      {/* title bar */}
      <header className="flex h-[23px] shrink-0 items-center bg-[#0078d7] pl-[3px] text-white">
        <svg viewBox="0 0 14 14" className="mr-[7px] h-[14px] w-[14px]">
          <path d="M3 0H14V14H3Z" fill="#7fc35a" />
          <path d="M0 3L6 0V4L3 5V13H0Z" fill="#e7f4df" />
          <path d="M6 4H12M6 7V12H12M6 9H10" fill="none" stroke="#fff" strokeWidth="1.5" />
        </svg>
        <h1 className="flex-1">EDEM Creator - C:/Users/kazuki.kagaya/data/EDEM/tutorial/screwAugerTutorial/New_EDEM_input_deck.dem</h1>
        <div className="flex pr-[2px]">
          <button aria-label="Minimize" className="flex w-[46px] justify-center">
            <svg viewBox="0 0 10 10" className="h-[10px] w-[10px]">
              <path d="M0 5.5H10" stroke="#fff" />
            </svg>
          </button>
          <button aria-label="Restore" className="flex w-[46px] justify-center">
            <svg viewBox="0 0 10 10" className="h-[10px] w-[10px]">
              <path d="M0.5 2.5H7.5V9.5H0.5ZM2.5 2.5V0.5H9.5V7.5H7.5" fill="none" stroke="#fff" />
            </svg>
          </button>
          <button aria-label="Close" className="flex w-[46px] justify-center">
            <svg viewBox="0 0 10 10" className="h-[10px] w-[10px]">
              <path d="M0 0L10 10M10 0L0 10" stroke="#fff" strokeWidth="1.2" />
            </svg>
          </button>
        </div>
      </header>

      <nav className="flex h-[21px] shrink-0 items-center gap-4 bg-white pl-2 text-[12px]">
        <button>File</button>
        <button>Tools</button>
        <button>View</button>
        <button>Displays</button>
        <button>Help</button>
      </nav>

      <Toolbar />

      <div className="flex min-h-0 flex-1">
        <ToolColumn tools={materialTools} />
        <ToolColumn tools={geometryTools} />
        <div className="flex min-w-0 flex-1 flex-col">
          <div className="flex min-h-0 flex-1">
            <CreatorTree />
            <Viewer />
          </div>
          <DataBrowser />
        </div>
      </div>

      <footer className="h-5 shrink-0 border-b-2 border-[#484646]" />
    </div>
  );
}
